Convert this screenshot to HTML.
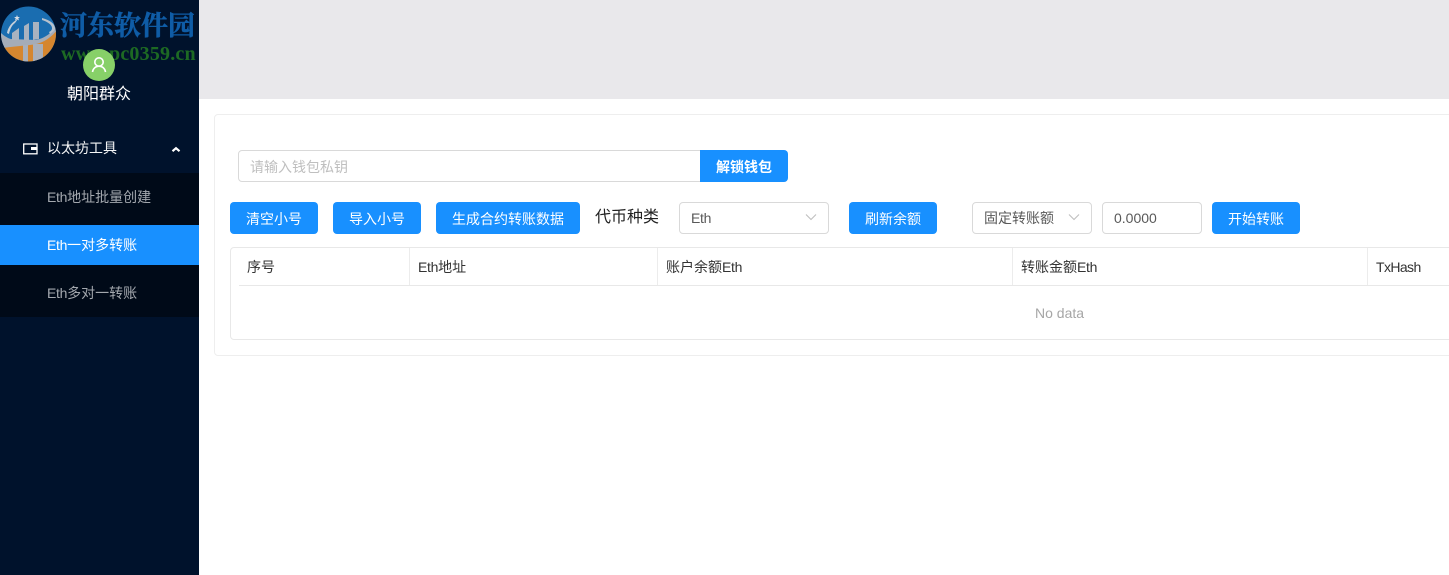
<!DOCTYPE html>
<html lang="zh">
<head>
<meta charset="utf-8">
<title>以太坊工具</title>
<style>
html,body{margin:0;padding:0;width:1449px;height:575px;overflow:hidden;background:#fff}
body{position:relative;font-family:"Liberation Sans","Noto Sans CJK SC",sans-serif;font-size:14px;color:#333}
.a{position:absolute;white-space:nowrap;box-sizing:border-box}
.btn{background:#1890ff;color:#fff;border-radius:4px;height:32px;top:202px;line-height:35px;text-align:center;font-size:14px}
.box{border:1px solid #d9d9d9;border-radius:4px;background:#fff;height:32px;top:202px;line-height:31px;color:#595959;font-size:14px}
.th{top:248px;height:37px;line-height:39px;font-size:14px;color:#333}
.e{letter-spacing:-.3px}
.vl{top:248px;height:37px;width:1px;background:#ececec}
.mi{left:0;width:199px;line-height:41px;height:40px;padding-left:47px;font-size:14px;color:#a3a8ae}
</style>
</head>
<body>
<div class="a" style="left:0;top:0;width:199px;height:575px;background:#00122c"></div>
<div class="a" style="left:0;top:173px;width:199px;height:144px;background:#000a18"></div>
<div class="a" style="left:0;top:225px;width:199px;height:40px;background:#1890ff"></div>

<svg class="a" style="left:0;top:0" width="60" height="66" viewBox="0 0 60 66">
<defs><clipPath id="c"><circle cx="28.500" cy="34" r="27.500"/></clipPath></defs>
<g clip-path="url(#c)">
<rect width="60" height="66" fill="#1a6db0"/>
<path d="M0 47C14 46 40 45 58 29V66H0Z" fill="#d5862f"/>
<path d="M0 32C3 35 7 38 11 39L36 40C45 38 52 33 56 26L58 29C50 39 42 44 30 45C20 46 10 47 2 48Z" fill="#a5acb7"/>
<path d="M23 45h5v18h-5zM33 44h10v18h-10z" fill="#a9afb9"/>
<path d="M7 33C8 27 12 22 18 19L15 23C12 25 10 29 9 34Z" fill="#c6d0da"/>
<path d="M12 40V33l7-5v12zM24 40V26l5-3v17zM33 40V22h6v17z" fill="#a9b3c0"/>
<path d="M42 18C50 20 55 24 55 28C55 30 53 32 50 34L49 32C51 31 52 30 52 28C52 25 48 22 42 20Z" fill="#b7c1cc"/>
<path d="M17 15l.8 2h2.200l-1.700 1.300.7 2.200-2-1.300-2 1.300.7-2.200-1.700-1.300h2.200z" fill="#d8dee6"/>
</g>
</svg>
<div class="a" style="left:60px;top:8px;font-family:'Liberation Serif','Noto Serif CJK SC',serif;font-weight:700;font-size:27px;line-height:36px;color:#0f5ca6;-webkit-text-stroke:.5px #0f5ca6">河东软件园</div>
<div class="a" style="left:61px;top:43px;font-family:'Liberation Serif',serif;font-weight:700;font-size:20px;line-height:22px;letter-spacing:.2px;color:#1d6a23">www.pc0359.cn</div>

<svg class="a" style="left:83px;top:49px" width="32" height="32" viewBox="0 0 32 32">
<circle cx="16" cy="16" r="16" fill="#87d068"/>
<circle cx="16" cy="13" r="4.200" fill="none" stroke="#fff" stroke-width="1.600"/>
<path d="M9.500 23c.5-3.500 3-5.800 6.500-5.800s6 2.300 6.500 5.800" fill="none" stroke="#fff" stroke-width="1.600"/>
</svg>
<div class="a" style="left:0;top:84px;width:198px;text-align:center;color:#fff;font-size:16px;line-height:22px">朝阳群众</div>

<svg class="a" style="left:23px;top:143px" width="15" height="12" viewBox="0 0 15 12">
<rect x=".7" y="1" width="13.300" height="9.800" fill="none" stroke="#fff" stroke-width="1.300"/>
<rect x="8" y="4" width="6" height="3" fill="#fff"/>
</svg>
<div class="a" style="left:47px;top:138px;font-size:14px;line-height:21px;color:#f5f6f7">以太坊工具</div>
<svg class="a" style="left:171px;top:146px" width="10" height="7" viewBox="0 0 10 7"><path d="M1.500 5.200L5 2.200L8.500 5.200" fill="none" stroke="#fff" stroke-width="2.200"/></svg>

<div class="a mi" style="top:177px"><span class="e">Eth</span>地址批量创建</div>
<div class="a mi" style="top:225px;color:#fff"><span class="e">Eth</span>一对多转账</div>
<div class="a mi" style="top:273px"><span class="e">Eth</span>多对一转账</div>

<div class="a" style="left:199px;top:0;width:1250px;height:99px;background:#e9e8eb"></div>
<div class="a" style="left:214px;top:114px;width:1240px;height:242px;border:1px solid #eeeeee;border-radius:4px;background:#fff"></div>

<div class="a" style="left:238px;top:150px;width:464px;height:32px;border:1px solid #d9d9d9;border-radius:4px 0 0 4px;background:#fff;padding-left:11px;line-height:33px;font-size:14px;color:#bfbfbf">请输入钱包私钥</div>
<div class="a" style="left:700px;top:150px;width:88px;height:32px;background:#1890ff;border-radius:0 4px 4px 0;color:#fff;text-align:center;line-height:35px;font-size:14px;font-weight:700">解锁钱包</div>

<div class="a btn" style="left:230px;width:88px">清空小号</div>
<div class="a btn" style="left:333px;width:88px">导入小号</div>
<div class="a btn" style="left:436px;width:144px">生成合约转账数据</div>
<div class="a" style="left:595px;top:206px;font-size:16px;line-height:23px;color:#222">代币种类</div>

<div class="a box" style="left:679px;width:150px;padding-left:11px"><span class="e">Eth</span></div>
<svg class="a" style="left:805px;top:213px" width="12" height="9" viewBox="0 0 12 9"><path d="M1 1.500l5 5 5-5" fill="none" stroke="#bfbfbf" stroke-width="1.100"/></svg>
<div class="a btn" style="left:849px;width:88px">刷新余额</div>
<div class="a box" style="left:972px;width:120px;padding-left:11px">固定转账额</div>
<svg class="a" style="left:1068px;top:213px" width="12" height="9" viewBox="0 0 12 9"><path d="M1 1.500l5 5 5-5" fill="none" stroke="#bfbfbf" stroke-width="1.100"/></svg>
<div class="a box" style="left:1102px;width:100px;padding-left:11px">0.0000</div>
<div class="a btn" style="left:1212px;width:88px">开始转账</div>

<div class="a" style="left:230px;top:247px;width:1230px;height:93px;border:1px solid #e8e8e8;border-radius:4px;background:#fff"></div>
<div class="a" style="left:239px;top:285px;width:1210px;height:1px;background:#e8e8e8"></div>
<div class="a vl" style="left:409px"></div>
<div class="a vl" style="left:657px"></div>
<div class="a vl" style="left:1012px"></div>
<div class="a vl" style="left:1367px"></div>
<div class="a th" style="left:247px">序号</div>
<div class="a th" style="left:418px"><span class="e">Eth</span>地址</div>
<div class="a th" style="left:666px">账户余额<span class="e">Eth</span></div>
<div class="a th" style="left:1021px">转账金额<span class="e">Eth</span></div>
<div class="a th" style="left:1376px;letter-spacing:-.6px">TxHash</div>
<div class="a" style="left:1035px;top:304px;font-size:14px;line-height:18px;color:#a6a6a6">No data</div>
</body>
</html>
